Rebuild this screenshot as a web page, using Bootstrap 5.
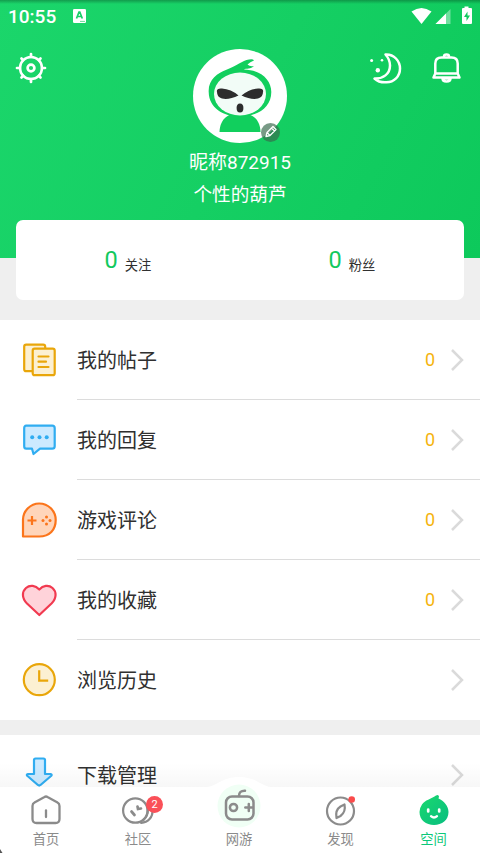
<!DOCTYPE html>
<html lang="zh-CN">
<head>
<meta charset="utf-8">
<meta name="viewport" content="width=device-width, initial-scale=1">
<title>空间</title>
<link href="https://cdn.jsdelivr.net/npm/bootstrap@5.3.0/dist/css/bootstrap.min.css" rel="stylesheet">
<style>
body{font-family:Roboto,"Noto Sans CJK SC",sans-serif;background:#efefef;color:#303030}
svg{display:block;flex:none;overflow:visible}
.screen{width:480px;height:853px}
.hero{height:258px;background:linear-gradient(#0004,#0000) 0 0/100% 4px no-repeat,linear-gradient(118deg,#1bd66b 0%,#15cf63 50%,#0dc95b 100%)}
.status{height:32px;padding:0 7px 0 8px}
.clock{font-size:19px;font-weight:500;line-height:32px;padding-top:1px;width:65px}
.tools{height:70px;padding:18px 18px 0 15px}
.bell{margin-left:28px}
.avatar{width:94px;height:94px;margin-top:-53px}
.nick{font-size:19px;line-height:30px;margin-top:5px}
.motto{font-size:18.6px;line-height:30px;margin-top:2px}
.stats{height:80px;margin:-38px 16px 20px;border-radius:7px}
.stat{padding-top:25px}
.stat b{font-size:23.5px;font-weight:400;line-height:31px;color:#12c95e}
.stat span{font-size:13.3px;line-height:20px;margin:11px 0 0 7px}
.entry{height:80px;padding-left:20px}
.entry-icon{width:38px;margin-right:19px}
.entry-icon svg{margin-top:-1px}
.entry-body{font-size:20px;padding:0 17px 0 0;border-bottom:1px solid #dcdcdc}
.entry:last-child .entry-body{border:0}
.entry-title{padding-top:2px}
.entry:last-child .entry-title{padding-top:1px}
.count{font-size:18px;color:#f5b40c;margin-right:16px}
.group-gap{margin-top:15px}
.tabs{height:66px;background:#fff;color:#8b8b8b;font-size:13.3px}
.tabs::before{content:"";position:absolute;left:0;right:0;top:-24px;height:24px;background:linear-gradient(#0000,#00000008)}
.tab{width:92px;position:relative}
.tab-mid{width:110px}
.tab-end{width:93px}
.tab-icon{height:43px;padding-top:7px}
.tab-mid .tab-icon{padding-top:0}
.tab-mid svg{margin-top:-23px}
.tab-label{line-height:20px}
.now{color:#0dc87a}
.bubble{left:54px;top:9px;width:17px;height:17px;font-size:11px;line-height:17px;background:#fa5058}
</style>
</head>
<body>
<main class="screen position-relative overflow-hidden">
  <header class="hero text-white">
    <div class="status d-flex align-items-center">
      <span class="clock">10:55</span>
      <svg width="13" height="14" viewBox="0 0 13 14"><rect width="13" height="14" rx="1.3" fill="#fff"/><path d="M3.500 9.500 6 3h.8l2.500 6.500M4.800 7.500h3.300" fill="none" stroke="#18cf67" stroke-width="1.700"/><path d="M7 12.400h5" stroke="#6bdc99"/></svg>
      <svg class="ms-auto" width="62" height="18" viewBox="0 0 62 18"><path d="M.5 4.500Q10.500-2.500 20.500 4.500L10.500 17Z" fill="#fff"/><path d="M39.500 2v15H24.500Z" fill="#fff" fill-opacity=".4"/><path d="M35 6.500V17H24.500Z" fill="#fff"/><path d="M53.500 1V-.5h4V1H60q1 0 1 1V16q0 1-1 1h-8q-1 0-1-1V2q0-1 1-1Z" fill="#fff"/><path d="M56.500 4.500 53 10h2.500v4l3.500-5.500h-2.500Z" fill="#12c95e"/></svg>
    </div>
    <div class="tools d-flex align-items-start">
      <svg width="32" height="36" viewBox="0 0 32 36" fill="none" stroke="#fff" stroke-width="2.500" stroke-linecap="round"><circle cx="16" cy="18" r="11"/><circle cx="16" cy="18" r="3.400" stroke-width="2.700"/><path d="M16 7V4M16 29v3M5 18H2M27 18h3M8.200 10.200 6.500 8.500M23.800 10.200l1.700-1.700M8.200 25.800l-1.700 1.700M23.800 25.800l1.700 1.700" stroke-width="2.700"/></svg>
      <svg class="ms-auto" width="34" height="36" viewBox="0 0 34 36" fill="none" stroke="#fff" stroke-width="2.500" stroke-linejoin="round"><path d="M16.500 4.500C25 4 31 11 31 18.500C31 26.500 25 32.300 17.500 32.300Q10 32.800 5.500 28.500C14 29 21 24 21 15.500Q21 9.500 16.500 4.500Z"/><g fill="#fff" stroke="none"><circle cx="2.600" cy="10.600" r="1.500"/><circle cx="13" cy="10.200" r="1.300"/><circle cx="8.800" cy="20.300" r="2.200"/></g></svg>
      <svg class="bell" width="31" height="36" viewBox="0 0 31 36" fill="none" stroke="#fff" stroke-width="2.500" stroke-linecap="round" stroke-linejoin="round"><path d="M4.300 23.500V13.500Q4.300 7.500 10.500 7.500h10Q26.700 7.500 26.700 13.500v10M4.300 23.500H26.700L28.500 27.500H2.500Z"/><path d="M13 6.500Q13 4.500 15.500 4.500T18 6.500M11.500 28.500q0 3 4 3t4-3Z"/></svg>
    </div>
    <div class="d-flex flex-column align-items-center text-center">
      <svg class="avatar" viewBox="0 0 94 94"><circle cx="47" cy="47" r="47" fill="#fff"/><path d="M26.500 83C27 69 36 64 47 64s20 5 20.500 19Z" fill="#11cf5d"/><path d="M15.700 43C15 31 24 24 34 20.500C44 17 49 11.500 56 10.500Q60 9.500 61 11.500Q57 13 54.500 15.500Q57 18 61 17C58 20.500 53 19 51 20.500C68 21 78.300 31 78.300 43C78.300 59 64 67.500 47 67.500S16 59 15.700 43Z" fill="#11cf5d"/><ellipse cx="47" cy="45" rx="26" ry="21.500" fill="#f2fcf7"/><path d="M24 43Q23 39 29 39.500Q38 40 45.500 46.500Q36 51 29 49.500Q24 48 24 43ZM70 43Q71 39 65 39.500Q56 40 48.500 46.500Q58 51 65 49.500Q70 48 70 43Z" fill="#2d2d2d"/><ellipse cx="47" cy="59" rx="3.400" ry="4.500" fill="#2d2d2d"/><circle cx="77.500" cy="83.500" r="9.500" fill="#386a4c" fill-opacity=".68"/><path d="m73 87.500 1-4 6-6 3 3-6 6Zm1-4 3 3M78.500 79l3 3" fill="none" stroke="#fff" stroke-width="1.300" stroke-linejoin="round"/></svg>
      <div class="nick">昵称872915</div>
      <div class="motto">个性的葫芦</div>
    </div>
  </header>

  <section class="stats bg-white d-flex position-relative">
    <div class="stat col-6 d-flex justify-content-center align-items-start"><b>0</b><span>关注</span></div>
    <div class="stat col-6 d-flex justify-content-center align-items-start"><b>0</b><span>粉丝</span></div>
  </section>

  <section class="bg-white">
    <div class="entry d-flex align-items-center">
      <div class="entry-icon"><svg width="38" height="38" viewBox="0 0 38 38" fill="#fcf0d2" stroke="#e9a60a" stroke-width="2.200" stroke-linejoin="round"><rect x="4.200" y="3.700" width="21" height="26.500" rx="2"/><rect x="12.700" y="7.700" width="22" height="26.500" rx="2"/><path d="M18.500 15.500h10M18.500 20.700h7.500M18.500 26h10" stroke-linecap="round"/></svg></div>
      <div class="entry-body flex-fill h-100 d-flex align-items-center"><span class="entry-title">我的帖子</span><span class="count ms-auto">0</span><svg width="12" height="22" viewBox="0 0 12 22" fill="none" stroke="#dadada" stroke-width="2.500"><path d="m1 1 10 10L1 21"/></svg></div>
    </div>
    <div class="entry d-flex align-items-center">
      <div class="entry-icon"><svg width="38" height="38" viewBox="0 0 38 38" fill="#cceaff" stroke="#30adf1" stroke-width="2.200" stroke-linejoin="round"><path d="M6.200 4.700h26q2.500 0 2.500 2.500v18q0 2.500-2.500 2.500H20L13.500 33 12 27.700H6.200q-2 0-2-2.500v-18q0-2.500 2-2.500Z"/><g fill="#30adf1" stroke="none"><circle cx="12.200" cy="16.300" r="2"/><circle cx="19.500" cy="16.300" r="2"/><circle cx="26.700" cy="16.300" r="2"/></g></svg></div>
      <div class="entry-body flex-fill h-100 d-flex align-items-center"><span class="entry-title">我的回复</span><span class="count ms-auto">0</span><svg width="12" height="22" viewBox="0 0 12 22" fill="none" stroke="#dadada" stroke-width="2.500"><path d="m1 1 10 10L1 21"/></svg></div>
    </div>
    <div class="entry d-flex align-items-center">
      <div class="entry-icon"><svg width="38" height="38" viewBox="0 0 38 38" fill="#ffd5ba" stroke="#fb751b" stroke-width="2.200" stroke-linejoin="round"><path d="M3 35.500V18.500A16.500 16.500 0 0 1 19.200 2.500A16.500 16.500 0 0 1 35.700 19C35.700 29 29.500 35.500 19.200 35.500Z"/><path d="M7.500 19.500h9M12 15v9"/><g fill="#fb751b" stroke="none"><circle cx="26.500" cy="16" r="1.500"/><circle cx="26.500" cy="23" r="1.500"/><circle cx="23" cy="19.500" r="1.500"/><circle cx="30" cy="19.500" r="1.500"/></g></svg></div>
      <div class="entry-body flex-fill h-100 d-flex align-items-center"><span class="entry-title">游戏评论</span><span class="count ms-auto">0</span><svg width="12" height="22" viewBox="0 0 12 22" fill="none" stroke="#dadada" stroke-width="2.500"><path d="m1 1 10 10L1 21"/></svg></div>
    </div>
    <div class="entry d-flex align-items-center">
      <div class="entry-icon"><svg width="38" height="38" viewBox="0 0 38 38" fill="#ffd3da" stroke="#f13a50" stroke-width="2.200" stroke-linejoin="round"><path d="M19.300 34 7 22.500C1.500 17 2 10.500 6 7C10 3.500 15.500 4.500 19.300 8.500C23 4.500 28.500 3.500 32.500 7C36.500 10.500 37 17 31.500 22.500Z"/></svg></div>
      <div class="entry-body flex-fill h-100 d-flex align-items-center"><span class="entry-title">我的收藏</span><span class="count ms-auto">0</span><svg width="12" height="22" viewBox="0 0 12 22" fill="none" stroke="#dadada" stroke-width="2.500"><path d="m1 1 10 10L1 21"/></svg></div>
    </div>
    <div class="entry d-flex align-items-center">
      <div class="entry-icon"><svg width="38" height="38" viewBox="0 0 38 38" fill="#fcf0d2" stroke="#e9a60a" stroke-width="2.200"><circle cx="19.300" cy="18.700" r="15.500"/><path d="M19.200 9.200V19.700h9" fill="none"/></svg></div>
      <div class="entry-body flex-fill h-100 d-flex align-items-center"><span class="entry-title">浏览历史</span><svg class="ms-auto" width="12" height="22" viewBox="0 0 12 22" fill="none" stroke="#dadada" stroke-width="2.500"><path d="m1 1 10 10L1 21"/></svg></div>
    </div>
  </section>

  <section class="bg-white group-gap">
    <div class="entry d-flex align-items-center">
      <div class="entry-icon"><svg width="38" height="38" viewBox="0 0 38 38" fill="#cceaff" stroke="#30adf1" stroke-width="2.200" stroke-linejoin="round"><path d="M15.500 2.500h8q1.500 0 1.500 1.500v14h5.500q2 .5.500 2L20.500 29q-1.300 1-2.600 0L7.500 20q-1.500-1.500.5-2h6V4q0-1.500 1.500-1.500Z"/></svg></div>
      <div class="entry-body flex-fill h-100 d-flex align-items-center"><span class="entry-title">下载管理</span><svg class="ms-auto" width="12" height="22" viewBox="0 0 12 22" fill="none" stroke="#dadada" stroke-width="2.500"><path d="m1 1 10 10L1 21"/></svg></div>
    </div>
  </section>

  <nav class="tabs d-flex text-center position-absolute bottom-0 start-0 w-100">
    <div class="tab">
      <div class="tab-icon d-flex justify-content-center"><svg width="32" height="32" viewBox="0 0 32 32" fill="none" stroke="#8b8b8b" stroke-width="2.300" stroke-linejoin="round" stroke-linecap="round"><path d="M16 2.500q.7 0 1.500.5l10 5.500q2 1 2 3.500v13q0 4-4 4h-19q-4 0-4-4V12q0-2.500 2-3.500l10-5.500q.8-.5 1.500-.5Z"/><path d="M16 16.500v6.500"/></svg></div>
      <div class="tab-label">首页</div>
    </div>
    <div class="tab">
      <div class="tab-icon d-flex justify-content-center"><svg width="32" height="32" viewBox="0 0 32 32" fill="none" stroke="#8b8b8b" stroke-width="2.200" stroke-linecap="round"><circle cx="13.300" cy="16.500" r="12.200"/><path d="M19 28.800C26 29 31 23 30.500 16M21.500 26Q26 22 26 15"/><path d="m9.500 17.500 3 3.500M15.500 12.500l.5 2.500 3-.5" stroke-width="2.700"/></svg></div>
      <span class="bubble position-absolute rounded-circle text-white">2</span>
      <div class="tab-label">社区</div>
    </div>
    <div class="tab tab-mid">
      <div class="tab-icon d-flex justify-content-center"><svg width="64" height="64" viewBox="0 0 64 64" fill="none" stroke="#8b8b8b" stroke-width="2.500" stroke-linecap="round"><path d="M0 23C10 22 15 13 32 13S54 22 64 23V64H0Z" fill="#fff" stroke="none"/><circle cx="32" cy="42" r="21.500" fill="#f0fff5" stroke="none"/><rect x="19" y="32.500" width="27.500" height="23" rx="6"/><path d="M32 32q0-5.500 6-5.300M38.300 43.500h7M41.800 40v7"/><circle cx="26.500" cy="43.500" r="3.600"/></svg></div>
      <div class="tab-label">网游</div>
    </div>
    <div class="tab tab-end">
      <div class="tab-icon d-flex justify-content-center"><svg width="32" height="32" viewBox="0 0 32 32" fill="none" stroke="#8b8b8b" stroke-width="2.200" stroke-linejoin="round"><circle cx="15.500" cy="17" r="13.500"/><path d="M19.500 10.500Q21 18 15.500 22L11.500 24Q10 16 15.500 12.500Z"/><circle cx="26.700" cy="5.500" r="3.300" fill="#fa4b4b" stroke="none"/></svg></div>
      <div class="tab-label">发现</div>
    </div>
    <div class="tab tab-end now">
      <div class="tab-icon d-flex justify-content-center"><svg width="32" height="32" viewBox="0 0 32 32"><defs><linearGradient id="leaf" x1="0" y1="0" x2="1" y2="1"><stop stop-color="#1ad96e"/><stop offset="1" stop-color="#08bd80"/></linearGradient></defs><path d="M4 10.500C7 6 13 5 18 1.500Q20.500 0 21 2.500L20.500 4.500C26 7 30.500 12 30.500 18C30.500 26 24 31 16 31S1.500 26 1.500 18Q1.500 14 4 10.500Z" fill="url(#leaf)"/><g fill="none" stroke="#fff" stroke-linecap="round"><path d="M10.200 15.500v2M21.200 15.500v2" stroke-width="2.700"/><path d="M13 22.200q3 2.700 6 0" stroke-width="2.300"/></g></svg></div>
      <div class="tab-label">空间</div>
    </div>
    <svg class="position-absolute bottom-0 start-0" width="3" height="4" viewBox="0 0 3 4"><path d="M0 0 2.500 4H0Z" fill="#555"/></svg>
  </nav>
</main>
<script src="https://cdn.jsdelivr.net/npm/bootstrap@5.3.0/dist/js/bootstrap.bundle.min.js"></script>
</body>
</html>
